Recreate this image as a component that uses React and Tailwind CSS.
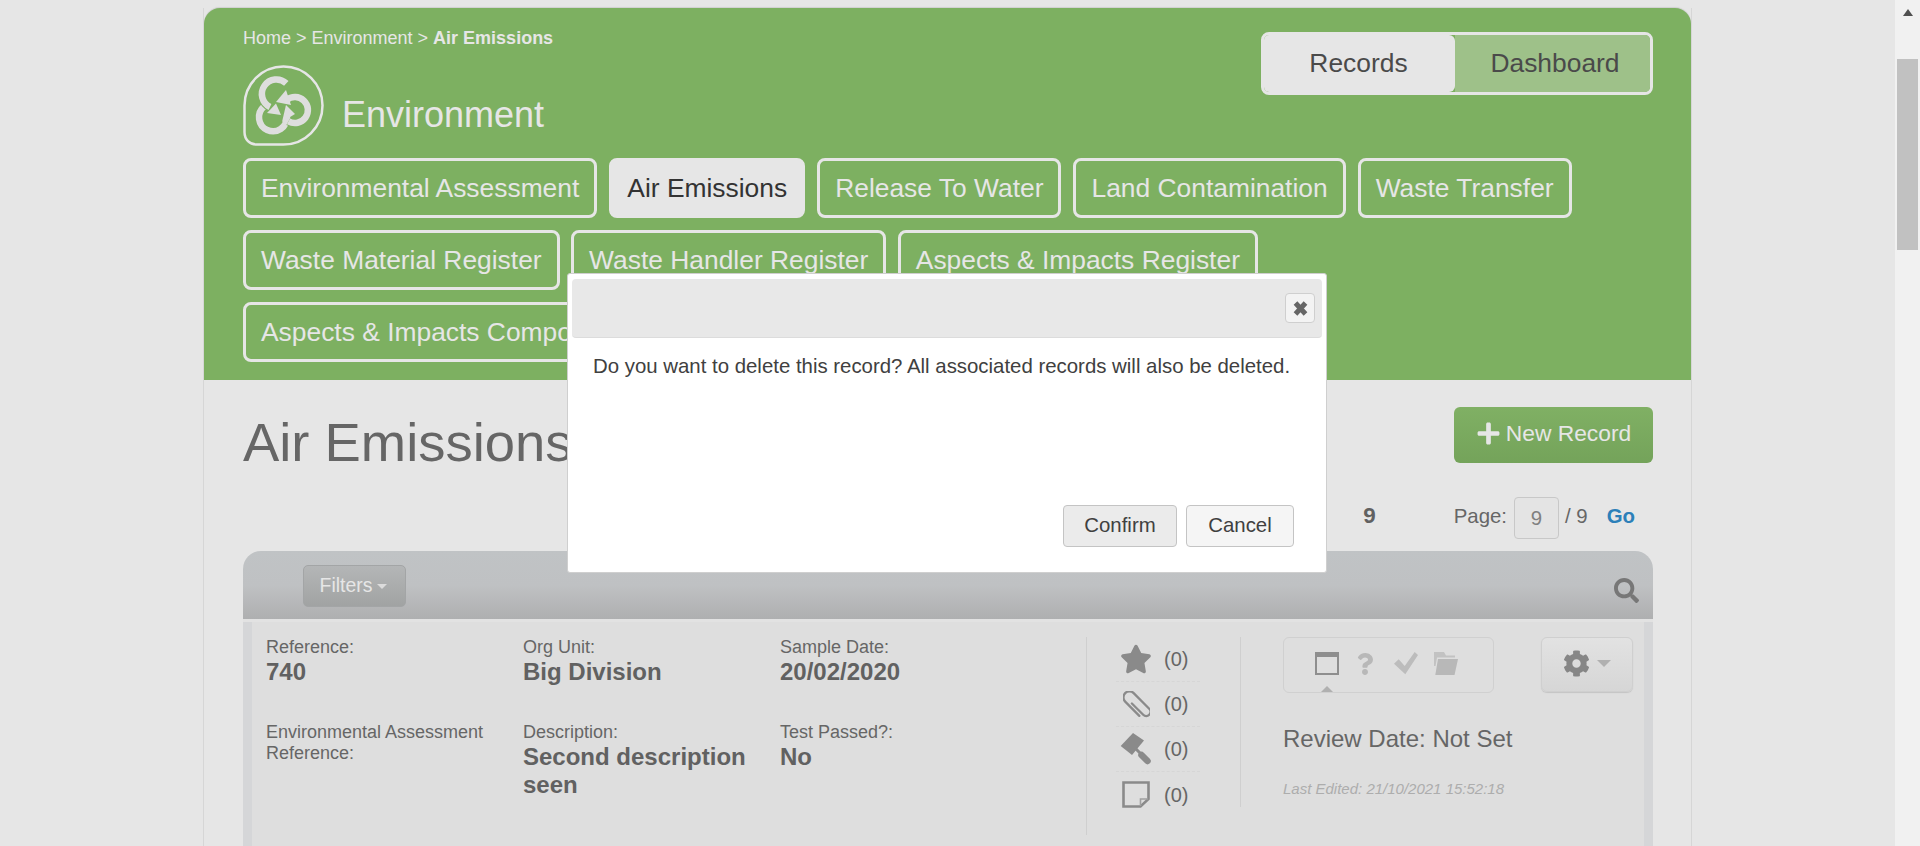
import React from "react";
import { FaStar, FaQuestion, FaCog, FaSearch, FaPlus } from "react-icons/fa";

function Logo() {
  const arcs = [
    "M44 52A14 14 0 1 1 21 41.5",
    "M43.6 35A13 13 0 1 1 45.5 56.3",
    "M43.3 18.4A14.5 14.5 0 1 0 27 42",
  ];
  return (
    <svg width="81" height="81" viewBox="0 0 81 81" className="shrink-0">
      <path d="M40.5 1.5C62 1.5 79.5 19 79.5 40.5S62 79.5 40.5 79.5H14C6.5 79.5 1.5 74.5 1.5 67V40.5C1.5 19 19 1.5 40.5 1.5Z" fill="none" stroke="#e6e6e6" strokeWidth="2.5" />
      {arcs.map((d) => (
        <g key={d} fill="none">
          <path d={d} stroke="#7db061" strokeWidth="8.5" />
          <path d={d} stroke="#dedede" strokeWidth="6.5" />
        </g>
      ))}
      <path d="M24 48L38 50L33 38.5Z" fill="#dedede" />
      <path d="M33 37L43 25L48 40Z" fill="#dedede" />
      <path d="M39 57L52 49L43 40Z" fill="#dedede" />
    </svg>
  );
}

function Clip() {
  return (
    <svg width="27" height="27" viewBox="0 0 27 27">
      <g transform="rotate(-45 13.5 13.5) translate(0 3.5)" fill="none" stroke="#8a8a8a" strokeWidth="2.3" strokeLinecap="round">
        <path d="M11 6V22A4.25 4.25 0 0 0 19.5 22V0A6 6 0 0 0 7.5 0V20" />
      </g>
    </svg>
  );
}

function Gavel() {
  return (
    <svg width="32" height="32" viewBox="0 0 32 32">
      <path d="M13 0L24 7.5L12 22L0.7 13Z" fill="#8a8a8a" />
      <path d="M15 15L21 21" stroke="#8a8a8a" strokeWidth="3" />
      <path d="M21.5 22L27.5 28" stroke="#8a8a8a" strokeWidth="6.5" strokeLinecap="round" />
    </svg>
  );
}

function Note() {
  return (
    <svg width="28" height="27" viewBox="0 0 28 27">
      <path d="M1.5 1.5H26.5V18L18.5 25.5H1.5Z" fill="none" stroke="#8a8a8a" strokeWidth="2.6" />
      <path d="M18.5 25V18H26" fill="none" stroke="#a0a0a0" strokeWidth="1.6" />
    </svg>
  );
}

function WindowIcon() {
  return (
    <svg width="24" height="23" viewBox="0 0 24 23" className="shrink-0">
      <rect x="1" y="1" width="22" height="21" fill="none" stroke="#8e8e8e" strokeWidth="2" />
      <rect x="1" y="1" width="22" height="4" fill="#8e8e8e" />
    </svg>
  );
}

function CheckIcon() {
  return (
    <svg width="24" height="23" viewBox="0 0 24 23" className="shrink-0">
      <polygon points="0,11.7 4.7,7.3 10.7,14 20.7,0 24,3 11.3,22.3" fill="#bcbcbc" />
    </svg>
  );
}

function FolderIcon() {
  return (
    <svg width="24" height="23" viewBox="0 0 24 23" className="shrink-0">
      <path d="M4 7H24L20.5 23H1.3Z" fill="#b8b8b8" />
      <path d="M0 0H10L12 3.5H21V5.5H3L1.5 14H0Z" fill="#c2c2c2" />
    </svg>
  );
}

const navRows = [
  ["Environmental Assessment", "Air Emissions", "Release To Water", "Land Contamination", "Waste Transfer"],
  ["Waste Material Register", "Waste Handler Register", "Aspects & Impacts Register"],
  ["Aspects & Impacts Compo"],
];

function NavButton({ label }) {
  const active = label === "Air Emissions";
  return (
    <div className={active
      ? "h-[60px] px-[15px] pt-[1px] flex items-center rounded-[8px] border-[3px] border-[#e6e6e6] bg-[#e6e6e6] text-[#333333] text-[26.4px] whitespace-nowrap"
      : "h-[60px] px-[15px] pt-[1px] flex items-center rounded-[8px] border-[3px] border-[#e6e6e6] text-[#e6e6e6] text-[26.4px] whitespace-nowrap"}>
      {label}
    </div>
  );
}

function Field({ label, value }) {
  return (
    <div>
      <div className="text-[18px] leading-[21px] text-[#666666]">{label}</div>
      {value && <div className="text-[24px] leading-[28px] font-bold text-[#616161]">{value}</div>}
    </div>
  );
}

function Count({ icon, dashed }) {
  return (
    <div className={dashed
      ? "h-[45px] w-[84px] shrink-0 flex items-center border-b border-dashed border-[#d6d6d6]"
      : "h-[45px] w-[84px] shrink-0 flex items-center"}>
      <span className="w-[48px] flex justify-center pr-[8px] text-[#8a8a8a]">{icon}</span>
      <span className="text-[20px] text-[#666666]">(0)</span>
    </div>
  );
}

export default function App() {
  return (
    <div className="relative flex h-[846px] overflow-hidden bg-[#e6e6e6] font-['Liberation_Sans',Arial,sans-serif]">
      <main className="flex-1 min-w-0 px-[204px] pt-[8px]">
        <div className="w-[1487px] h-[838px] shadow-[-1px_0_0_#d6d6d6,1px_0_0_#d6d6d6]">
          <header className="h-[372px] rounded-t-[16px] bg-[#7db061] pl-[39px] pr-[38px] pt-[20px] flex flex-col shadow-[0_-1px_1px_#d0d0d0]">
            <div className="flex justify-between items-start">
              <div>
                <div className="text-[18px] leading-[20px] text-[#e6e6e6] whitespace-nowrap">Home &gt; Environment &gt; <b>Air Emissions</b></div>
                <div className="mt-[17px] flex items-end gap-[18px]">
                  <Logo />
                  <span className="text-[36px] leading-[42px] mb-[10px] text-[#e6e6e6]">Environment</span>
                </div>
              </div>
              <div className="mt-[4px] flex w-[392px] h-[63px] rounded-[8px] border-[3px] border-[#e6e6e6] overflow-hidden text-[26.4px] text-[#4a4a4a]">
                <div className="w-[191px] bg-[#e6e6e6] rounded-r-[6px] flex items-center justify-center pr-[2px]">Records</div>
                <div className="flex-1 bg-[#9ec189] flex items-center justify-center pl-[5px]">Dashboard</div>
              </div>
            </div>
            <nav className="mt-[12px] flex flex-col gap-[12px]">
              {navRows.map((row, i) => (
                <div key={i} className={i === 1 ? "flex gap-[11.5px]" : "flex gap-[12px]"}>
                  {row.map((label) => <NavButton key={label} label={label} />)}
                </div>
              ))}
            </nav>
          </header>

          <section className="pl-[39px] pr-[38px]">
            <div className="flex justify-between items-start h-[116px]">
              <h1 className="mt-[32px] text-[54.4px] leading-[62px] text-[#666666]">Air Emissions</h1>
              <div className="mt-[27px] w-[199px] h-[56px] rounded-[6px] bg-gradient-to-b from-[#80b064] to-[#74a35a] flex items-center justify-center gap-[5px] pb-[3px] text-[22.8px] text-[#e6e6e6]">
                <FaPlus size={25} />
                <span>New Record</span>
              </div>
            </div>
            <div className="h-[55px] pt-[1px] flex items-start justify-end pr-[18px] text-[20.4px] text-[#666666]">
              <div className="h-[42px] flex items-center">
                <b className="mr-[78px] -mt-[5px] text-[#616161] text-[22.4px]">9</b>
                <span className="-mt-[4px]">Page:</span>
                <span className="ml-[7px] w-[45px] h-[42px] rounded-[4px] border border-[#c8c8c8] bg-[#e4e4e4] flex items-center justify-center text-[#808080]">9</span>
                <span className="ml-[6px] -mt-[4px]">/ 9</span>
                <b className="ml-[19px] -mt-[4px] text-[#2c80b9]">Go</b>
              </div>
            </div>

            <div className="h-[295px] flex flex-col">
              <div className="h-[68px] rounded-t-[18px] bg-gradient-to-b from-[#c0c3c5] via-[#bfc1c3] to-[#aeafb0] flex items-start justify-between pl-[60px] pr-[14px] pt-[14px]">
                <div className="w-[103px] h-[42px] rounded-[5px] border border-[#a3a5a6] bg-gradient-to-b from-[#b4b6b7] to-[#a1a3a3] flex items-center justify-center gap-[5px] pr-[2px] text-[19.4px] text-[#e6e6e6]">
                  Filters
                  <span className="border-x-[5px] border-x-transparent border-t-[5px] border-t-[#dcdcdc]" />
                </div>
                <FaSearch size={25} className="mt-[13px] text-[#777777]" />
              </div>
              <div className="flex-1 border-t-[3px] border-[#e2e2e2] flex bg-[#d5d6d8] px-[9px]">
                <div className="flex-1 bg-[#dedede] flex pl-[14px] pt-[15px]">
                  <div className="w-[821px] h-[198px] shrink-0 border-r border-[#cfcfcf] grid grid-cols-[257px_257px_1fr] grid-rows-[85px_1fr]">
                    <Field label="Reference:" value="740" />
                    <Field label="Org Unit:" value="Big Division" />
                    <Field label="Sample Date:" value="20/02/2020" />
                    <Field label={<>Environmental Assessment<br />Reference:</>} />
                    <Field label="Description:" value={<span className="block w-[230px]">Second description seen</span>} />
                    <Field label="Test Passed?:" value="No" />
                  </div>
                  <div className="ml-[29px] w-[125px] h-[170px] shrink-0 border-r border-[#cfcfcf] flex flex-col">
                    <Count dashed icon={<FaStar size={32} />} />
                    <Count dashed icon={<Clip />} />
                    <Count dashed icon={<Gavel />} />
                    <Count icon={<Note />} />
                  </div>
                  <div className="ml-[42px] flex-1">
                    <div className="flex items-start">
                      <div className="relative w-[211px] h-[56px] rounded-[6px] border border-[#d0d0d0] flex items-start pl-[31px] pt-[14px] text-[#b8b8b8]">
                        <WindowIcon />
                        <FaQuestion size={22} className="ml-[15px] mt-[1px] shrink-0" />
                        <div className="ml-[18px]"><CheckIcon /></div>
                        <div className="ml-[16px]"><FolderIcon /></div>
                        <span className="absolute left-[37px] bottom-0 border-x-[6px] border-x-transparent border-b-[6px] border-b-[#b0b0b0]" />
                      </div>
                      <div className="ml-[47px] w-[92px] h-[55px] rounded-[6px] border border-[#cfcfcf] bg-gradient-to-b from-[#e2e2e2] to-[#d6d6d6] shadow-[0_1px_1px_#c4c4c4] flex items-center justify-center gap-[7px] pb-[2px] text-[#868686]">
                        <FaCog size={27} />
                        <span className="border-x-[7px] border-x-transparent border-t-[7px] border-t-[#b0b0b0]" />
                      </div>
                    </div>
                    <div className="mt-[32px] text-[24px] leading-[28px] text-[#666666]">Review Date: Not Set</div>
                    <div className="mt-[27px] text-[15px] leading-[17px] italic text-[#adadad]">Last Edited: 21/10/2021 15:52:18</div>
                  </div>
                </div>
              </div>
            </div>
          </section>
        </div>
      </main>

      <aside className="w-[25px] shrink-0 bg-[#f1f1f1] flex flex-col items-center">
        <div className="mt-[9px] mb-[7px] border-x-[5px] border-x-transparent border-b-[7px] border-b-[#505050]" />
        <div className="mt-[36px] w-[21px] h-[191px] bg-[#c1c1c1]" />
      </aside>

      <div className="absolute left-[567px] top-[273px] w-[760px] h-[300px] bg-white rounded-[3px] border border-[#cfcfcf] pl-[4px] pr-[4px] pt-[5px] flex flex-col">
        <div className="h-[59px] shrink-0 rounded-[4px] bg-[#e8e8e8] border-b border-[#dcdcdc] flex items-center justify-end pr-[7px]">
          <div className="w-[30px] h-[30px] rounded-[4px] border border-[#cfcfcf] bg-[#f3f3f3] flex items-center justify-center">
            <svg width="17" height="17" viewBox="0 0 17 17">
              <path d="M3.5 3L13.5 14M13.5 3L3.5 14" stroke="#666666" strokeWidth="5" />
            </svg>
          </div>
        </div>
        <p className="mt-[16px] pl-[21px] text-[20.4px] leading-[24px] text-[#404040] whitespace-nowrap">Do you want to delete this record? All associated records will also be deleted.</p>
        <div className="mt-auto mb-[25px] pr-[28px] flex justify-end gap-[9px] text-[20.4px] text-[#404040]">
          <div className="w-[114px] h-[42px] pb-[1px] rounded-[4px] border border-[#c4c4c4] bg-[#ebebeb] flex items-center justify-center">Confirm</div>
          <div className="w-[108px] h-[42px] pb-[1px] rounded-[4px] border border-[#c4c4c4] bg-[#f5f5f5] flex items-center justify-center">Cancel</div>
        </div>
      </div>
    </div>
  );
}
